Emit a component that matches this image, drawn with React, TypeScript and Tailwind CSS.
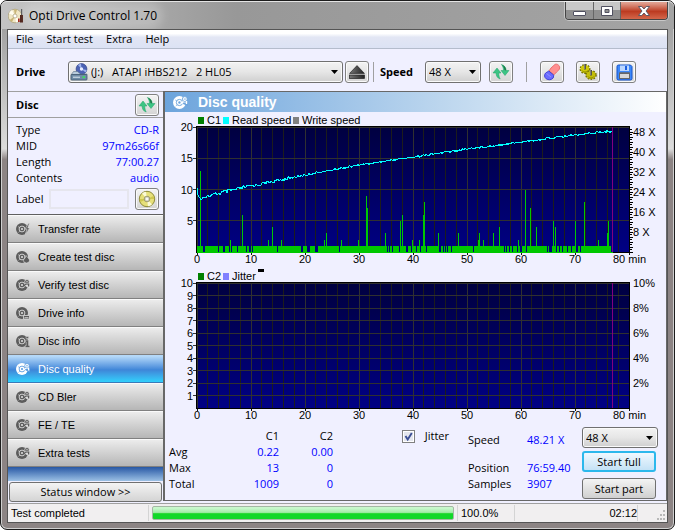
import { useState } from "react"
import type { ReactNode } from "react"

const LEFT = 32
const RIGHT = 464
const TOP = 15
const BOTTOM = 140

// [x, C1 count]
const c1Peaks = [
  [35, 13], [65, 2], [77, 6], [103, 2], [107, 4], [116, 2], [159, 2], [161, 3], [176, 2],
  [193, 2], [201, 9], [202, 7], [220, 3], [235, 5], [237, 6], [247, 2], [254, 2], [258, 6],
  [259, 8], [273, 3], [293, 3], [313, 2], [314, 3], [318, 2], [328, 3], [334, 4], [353, 2],
  [360, 10], [365, 7], [371, 4], [388, 5], [390, 4], [410, 5], [419, 8], [433, 2], [442, 3], [443, 5],
]

// [x, width] of the stretches without errors
const c1Gaps = [
  [38, 2], [53, 1], [58, 2], [64, 3], [72, 1], [77, 1], [81, 1], [84, 2], [87, 1], [112, 1],
  [136, 2], [142, 3], [150, 3], [174, 1], [222, 1], [224, 1], [227, 1], [234, 1], [241, 2],
  [246, 1], [251, 1], [255, 1], [261, 1], [274, 2], [278, 1], [280, 1], [282, 1], [286, 1],
  [308, 1], [339, 1], [341, 1], [344, 1], [347, 1], [352, 1], [355, 2], [361, 1], [382, 1],
  [384, 3], [391, 1], [394, 1], [397, 1], [402, 1], [406, 1], [411, 2], [415, 1], [446, 1],
]

const speedAnchors = [
  [32, 77], [33, 83], [34, 86], [36, 86], [59, 80], [86, 74], [140, 63], [194, 53],
  [248, 45], [302, 37], [356, 30], [410, 23], [447, 19],
]

function speedPoints() {
  const points: string[] = []
  for (let x = 32; x <= 447; x++) {
    const i = Math.max(1, speedAnchors.findIndex((a) => a[0] >= x))
    const [x1, y1] = speedAnchors[i - 1]
    const [x2, y2] = speedAnchors[i]
    const base = y1 + ((y2 - y1) * (x - x1)) / (x2 - x1)
    const r = Math.sin(x * 12.9898) * 43758.5453
    const noise = r - Math.floor(r) - 0.5
    const amp = x > 50 && x < 90 ? 4 : x < 125 ? 3 : 2
    points.push(`${x},${(base + noise * amp).toFixed(1)}`)
  }
  return points.join(" ")
}

const navItems = [
  "Transfer rate",
  "Create test disc",
  "Verify test disc",
  "Drive info",
  "Disc info",
  "Disc quality",
  "CD Bler",
  "FE / TE",
  "Extra tests",
]

const discRows = [
  ["Type", "CD-R"],
  ["MID", "97m26s66f"],
  ["Length", "77:00.27"],
  ["Contents", "audio"],
]

function DiscGlyph({ kind, color = "#5c5c5c", hole = "#dcdcdc", size = 14 }: { kind: string; color?: string; hole?: string; size?: number }) {
  return (
    <svg width={size} height={size} viewBox="0 0 14 14" aria-hidden="true">
      <circle cx="6" cy="7" r="6" fill={color} />
      <circle cx="6" cy="7" r="2.9" fill="none" stroke={hole} strokeWidth="0.9" />
      <circle cx="6" cy="7" r="1.1" fill={hole} />
      <path d="M2 4.6l1.6 1M2.5 10.4l1.4-1.2" stroke={hole} strokeWidth="0.6" />
      {kind === "Transfer rate" && (
        <path d="M12.4 1.5L9 7h2l-1.6 5L13.8 6h-2l1.6-4.5z" fill={color} stroke={hole} strokeWidth="0.6" />
      )}
      {kind === "Create test disc" && (
        <path d="M10 5.5c1 1.6 3.6 3 3.6 5.2a3.2 3.2 0 0 1-6.2 0C7.4 9 10 8 10 5.5z" fill={color} stroke={hole} strokeWidth="0.7" />
      )}
      {kind === "Drive info" && (
        <path d="M7.5 9.5h6v3.5h-6zM8.5 11.6h4" fill={color} stroke={hole} strokeWidth="0.8" />
      )}
      {kind === "Disc info" && (
        <path d="M10 2.5h2.6v2H10zM9.4 6h3.2v5.5h1.2v2H9.2v-2h1V8h-.8z" fill={color} stroke={hole} strokeWidth="0.5" />
      )}
      {!["Transfer rate", "Create test disc", "Drive info", "Disc info"].includes(kind) && (
        <>
          <path d="M8.5 7H14v3.2L9.8 8.6z" fill={hole} />
          <circle cx="11" cy="3.8" r="2.3" fill={color} stroke={hole} strokeWidth="0.8" />
          <path d="M10 3.8h2" stroke={hole} strokeWidth="0.8" />
          <path d="M9.5 6L8 8.2M12.6 5.5v3" stroke={color} strokeWidth="1.3" />
        </>
      )}
    </svg>
  )
}

function RefreshIcon() {
  return (
    <svg width="18" height="18" viewBox="0 0 18 18" aria-hidden="true">
      <path d="M5 5L9 10H6.800c0 2.500.4 4 1.400 6-3-.8-4-3.200-4.200-6H1z" fill="#3cc484" stroke="#1fa566" strokeWidth="0.5" />
      <path d="M13 12.500L9 7.500h2.500C11.400 5 10.800 3 9.400 1.500c3.200.8 4.600 3.200 4.800 6H17z" fill="#3cc484" stroke="#1fa566" strokeWidth="0.5" />
      <path d="M9.400 1.500c3.200.8 4.600 3.200 4.800 6l-1.800-.4C12.300 4.500 11 2.800 9.400 1.500z" fill="#1d7a4a" />
    </svg>
  )
}

function EjectIcon() {
  return (
    <svg width="16" height="14" viewBox="0 0 16 14" aria-hidden="true">
      <defs>
        <linearGradient id="eject" x1="0" y1="0" x2="1" y2="0">
          <stop offset="0" stopColor="#777" />
          <stop offset="1" stopColor="#222" />
        </linearGradient>
      </defs>
      <path d="M8 .6L15.4 8.4H.6z" fill="url(#eject)" stroke="#222" strokeWidth="0.7" />
      <rect x="0.5" y="10" width="15" height="3.5" fill="url(#eject)" stroke="#222" strokeWidth="0.7" />
    </svg>
  )
}

function EraserIcon() {
  return (
    <svg width="18" height="18" viewBox="0 0 18 18" aria-hidden="true">
      <path d="M8 5l4-3.600c2-1 5 1 4.600 3.600-.1 2-1.600 2.600-3 4l-2.600 2.800L6 8z" fill="#ff8f8f" stroke="#e86464" strokeWidth="0.9" />
      <path d="M5.800 8l5 4.200-.6 2.800c-1.800 2.200-5 2.200-7 .8-2-1.600-2.200-4-.6-5.800z" fill="#6b6bff" stroke="#3a3ad0" strokeWidth="0.9" />
      <path d="M3.500 10.500l4.500 3.500" stroke="#9c9cff" strokeWidth="0.8" />
    </svg>
  )
}

function GearsIcon() {
  return (
    <svg width="18" height="18" viewBox="0 0 18 18" aria-hidden="true">
      <ellipse cx="6" cy="6" rx="4.500" ry="4" fill="#d6d000" stroke="#6f6c00" strokeWidth="2" strokeDasharray="1.600 1.200" />
      <ellipse cx="6" cy="6" rx="4.200" ry="3.700" fill="#d0ca08" />
      <ellipse cx="12" cy="12" rx="4.800" ry="4" fill="#c8c200" stroke="#6f6c00" strokeWidth="2" strokeDasharray="1.600 1.200" />
      <ellipse cx="12" cy="12" rx="4.500" ry="3.700" fill="#c4be08" />
      <path d="M3 7.500c1.500 2 4.500 2 6 0M9 13.500c1.500 2 4.500 2 6 0" fill="none" stroke="#8a8600" />
      <path d="M6 1v5.500M12 7v5.500" stroke="#4d4d4d" strokeWidth="1.800" />
      <path d="M5.400 1v5M11.400 7v5" stroke="#aaa" strokeWidth="0.6" />
    </svg>
  )
}

function SaveIcon() {
  return (
    <svg width="17" height="17" viewBox="0 0 17 17" aria-hidden="true">
      <path d="M1 2.500A1.500 1.500 0 0 1 2.500 1h12L16 2.500v12a1.500 1.500 0 0 1-1.500 1.500h-12A1.500 1.500 0 0 1 1 14.500z" fill="#3c88fa" stroke="#1450c8" />
      <rect x="4" y="1.500" width="9" height="5.500" fill="#bcd7ff" />
      <rect x="9" y="2" width="2" height="4" fill="#1d5fe0" />
      <rect x="3.500" y="9" width="10" height="5.500" fill="#d8d8d8" stroke="#666" />
      <rect x="3.500" y="8.500" width="10" height="1.500" fill="#666" />
    </svg>
  )
}

function YellowDiscIcon() {
  return (
    <svg width="18" height="18" viewBox="0 0 18 18" aria-hidden="true">
      <circle cx="9" cy="9" r="7.700" fill="#e6e07a" stroke="#8e8a3a" />
      <path d="M9 9L4 3.500A7.500 7.500 0 0 1 8 1.700zM9 9l5 5.500a7.500 7.500 0 0 1-4 1.800z" fill="#fbfad8" />
      <path d="M9 9L15.500 6a7.500 7.500 0 0 1 .8 3zM9 9L2.500 12a7.500 7.500 0 0 1-.8-3z" fill="#cfc850" />
      <circle cx="9" cy="9" r="2.800" fill="#d8d8c8" stroke="#8e8a5a" strokeWidth="0.8" />
      <circle cx="9" cy="9" r="1.100" fill="#fff" />
    </svg>
  )
}

function DriveIcon() {
  return (
    <svg width="18" height="18" viewBox="0 0 18 18" aria-hidden="true">
      <circle cx="11.500" cy="6" r="5.400" fill="#4c63b4" stroke="#2c3f86" strokeWidth="0.7" />
      <path d="M11.500 6L8 2a5.200 5.200 0 0 1 3-1.300zM11.500 6l4 3.500a5 5 0 0 0 1.200-2.500z" fill="#9fb4ee" />
      <circle cx="11.500" cy="6" r="1.700" fill="#e6ecff" />
      <path d="M3.500 8.500h4l3 2.500h6.500L17 12H1z" fill="#b8cbdc" stroke="#5a7186" strokeWidth="0.6" />
      <rect x="1" y="11.500" width="16" height="5.500" rx="0.8" fill="#6f8ca6" stroke="#3d566c" strokeWidth="0.8" />
      <path d="M3 14.200h7" stroke="#dfe9f2" />
      <rect x="12.500" y="13.300" width="2.500" height="1.800" fill="#3be05a" />
    </svg>
  )
}

function AppIcon() {
  return (
    <svg width="16" height="16" viewBox="0 0 16 16" aria-hidden="true">
      <circle cx="7" cy="8" r="6.800" fill="#efe6c4" stroke="#a89c74" strokeWidth="0.7" />
      <path d="M7 8L1 5.500A6.500 6.500 0 0 1 4 2zM7 8l5 4.500A6.500 6.500 0 0 1 8 14.600z" fill="#fffdf0" />
      <path d="M7 8L6 1.400a6.500 6.500 0 0 1 3 .3zM7 8l-3 6a6.500 6.500 0 0 1-2.300-2z" fill="#c8b578" />
      <circle cx="7" cy="8" r="2" fill="#fff" stroke="#a89c74" strokeWidth="0.7" />
      <path d="M13.600 1v6" stroke="#555" strokeWidth="1.200" />
      <path d="M12 7h3v7.500h-3z" fill="#4a1d14" />
      <path d="M10 10.500h1.700V14H10z" fill="#a0281e" />
    </svg>
  )
}

function IconButton({ label, children }: { label: string; children: ReactNode }) {
  return (
    <button
      type="button"
      aria-label={label}
      className="flex h-[22px] w-6 shrink-0 items-center justify-center rounded-[3px] border border-[#808080] bg-linear-to-b from-[#f4f4f4] to-[#d4d4d4] shadow-[inset_0_0_0_1px_#fafafa]"
    >
      {children}
    </button>
  )
}

function Picker({ label, options, icon, className }: { label: string; options: string[]; icon?: ReactNode; className: string }) {
  return (
    <div className={`relative ${className}`}>
      {icon && <span className="pointer-events-none absolute top-[2px] left-[2px]">{icon}</span>}
      <select
        aria-label={label}
        className={`h-full w-full appearance-none rounded-[3px] border border-[#707070] bg-linear-to-b from-[#f3f3f3] via-[#e6e6e6] to-[#cfcfcf] ${icon ? "pl-[22px]" : "pl-[3px]"} text-[11px] leading-4 shadow-[inset_0_0_0_1px_#fafafa]`}
      >
        {options.map((o) => (
          <option key={o}>{o}</option>
        ))}
      </select>
      <svg width="7" height="4" viewBox="0 0 7 4" className="pointer-events-none absolute top-[9px] right-[5px]">
        <path d="M0 0h7L3.500 4z" />
      </svg>
    </div>
  )
}

function ChartFrame({ id, step, labels, children }: { id: string; step: number; labels: string[]; children: ReactNode }) {
  return (
    <svg viewBox="0 0 501 156" className="block w-full font-['Liberation_Sans',Arial,sans-serif] text-[11px]">
      <defs>
        <linearGradient id={id} x1="0" y1="0" x2="0" y2="1">
          <stop offset="0" stopColor="#000040" />
          <stop offset="1" stopColor="#000084" />
        </linearGradient>
      </defs>
      <rect x={LEFT} y={TOP} width={RIGHT - LEFT} height={BOTTOM - TOP} fill={`url(#${id})`} />
      <g shapeRendering="crispEdges">
        {Array.from({ length: 41 }, (_, i) => (
          <path key={i} d={`M${Math.floor(LEFT + i * 10.8) + 0.5} ${TOP}V${BOTTOM}`} stroke={i % 5 ? "#1c1c1c" : "#303030"} />
        ))}
        {labels.map((l, i) => {
          const y = Math.floor(TOP + i * step) + 0.5
          return (
            <g key={l}>
              <path d={`M${LEFT} ${y}H${RIGHT}`} stroke="#303030" />
              <path d={`M28 ${y}H${LEFT}`} stroke="#333" />
            </g>
          )
        })}
        {Array.from({ length: 9 }, (_, i) => (
          <path key={i} d={`M${LEFT + i * 54 + 0.5} ${BOTTOM}v3`} stroke="#111" />
        ))}
      </g>
      <rect x={LEFT - 0.5} y={TOP - 0.5} width={RIGHT - LEFT + 1} height={BOTTOM - TOP + 1} fill="none" stroke="#000" shapeRendering="crispEdges" />
      {children}
      {labels.map((l, i) => (
        <text key={l} x="28" y={TOP + i * step + 4} textAnchor="end">{l}</text>
      ))}
      {Array.from({ length: 8 }, (_, i) => (
        <text key={i} x={LEFT + i * 54} y="151" textAnchor="middle">{i * 10}</text>
      ))}
      <text x="448" y="151">80 min</text>
    </svg>
  )
}

function QualityChart() {
  return (
    <ChartFrame id="c1bg" step={31.25} labels={["20", "15", "10", "5"]}>
      <rect x="33" y="5" width="6" height="7" fill="#008000" />
      <text x="42" y="12">C1</text>
      <rect x="58" y="5" width="6" height="7" fill="#00ffff" />
      <text x="67" y="12">Read speed</text>
      <rect x="128" y="5" width="6" height="7" fill="#808080" />
      <text x="137" y="12">Write speed</text>
      <g shapeRendering="crispEdges">
        <rect x="32" y="134" width="416" height="7" fill="#00c800" />
        {c1Gaps.map(([x, w]) => (
          <rect key={x} x={x} y="134" width={w} height="6" fill="#000080" />
        ))}
        {c1Peaks.map(([x, n]) => (
          <rect key={x} x={x} y={Math.round(BOTTOM - n * 6.25)} width="1" height={Math.round(n * 6.25)} fill="#00c800" />
        ))}
        <polyline points={speedPoints()} fill="none" stroke="#00ffff" />
        <path d="M447.5 15V140" stroke="#800080" />
        {Array.from({ length: 50 }, (_, i) => (
          <path key={i} d={`M465 ${Math.floor(140 - i * 2.5) + 0.5}h${i % 2 ? 2 : 3}`} stroke="#000" />
        ))}
      </g>
      {[48, 40, 32, 24, 16, 8].map((s, i) => (
        <text key={s} x="468" y={24 + i * 20}>{s} X</text>
      ))}
    </ChartFrame>
  )
}

function JitterChart() {
  return (
    <ChartFrame id="c2bg" step={12.5} labels={["10", "9", "8", "7", "6", "5", "4", "3", "2", "1"]}>
      <rect x="33" y="5" width="6" height="7" fill="#008000" />
      <text x="42" y="12">C2</text>
      <rect x="58" y="5" width="6" height="7" fill="#8080ff" />
      <text x="67" y="12">Jitter</text>
      <rect x="93" y="1" width="6" height="3" />
      <path d="M447.5 15V140" stroke="#800080" shapeRendering="crispEdges" />
      {["10%", "8%", "6%", "4%", "2%"].map((p, i) => (
        <text key={p} x="468" y={19 + i * 25}>{p}</text>
      ))}
    </ChartFrame>
  )
}

function Sidebar({ active, onSelect }: { active: string; onSelect: (name: string) => void }) {
  return (
    <aside className="flex w-[155px] shrink-0 flex-col border-t border-[#a0a0a0]">
      <div className="flex h-[26px] items-center justify-between border-b border-[#a0a0a0] pr-1 pl-2">
        <h2 className="font-bold">Disc</h2>
        <IconButton label="Refresh disc"><RefreshIcon /></IconButton>
      </div>
      <div className="pt-1 pr-1 pb-1 pl-2">
        <dl>
          {discRows.map(([name, value]) => (
            <div key={name} className="flex h-4 items-center justify-between">
              <dt>{name}</dt>
              <dd className="text-[#0000ff]">{value}</dd>
            </div>
          ))}
        </dl>
        <div className="flex items-center pt-[2px]">
          <label htmlFor="disc-label" className="w-[33px]">Label</label>
          <input id="disc-label" className="mr-1.5 h-5 w-0 flex-1 border-2 border-[#e6e6ee] bg-[#f0f0ff] px-1" />
          <IconButton label="Read label"><YellowDiscIcon /></IconButton>
        </div>
      </div>
      <nav className="border-t border-[#606060] font-['Liberation_Sans',Arial,sans-serif]">
        {navItems.map((item) => (
          <button
            key={item}
            type="button"
            onClick={() => onSelect(item)}
            className={
              item === active
                ? "flex h-7 w-full items-center gap-2 border-b border-[#3a7ab8] bg-linear-to-b from-[#b4d8f8] from-5% via-[#3f86d8] via-55% to-[#30d0fc] pl-2 text-white"
                : "flex h-7 w-full items-center gap-2 border-t border-b border-t-[#fafafa] border-b-[#808080] bg-linear-to-b from-[#ececec] to-[#b6b6b6] pl-2"
            }
          >
            <DiscGlyph kind={item} color={item === active ? "#ffffff" : undefined} hole={item === active ? "#5c9ce0" : undefined} />
            {item}
          </button>
        ))}
      </nav>
      <div className="min-h-3.5 flex-1 bg-linear-to-b from-[#2858a4] to-[#9cc0e4]" />
      <div className="p-px">
        <button type="button" className="h-5 w-full rounded-[3px] border border-[#707070] bg-linear-to-b from-[#f4f4f4] to-[#d4d4d4]">
          Status window &gt;&gt;
        </button>
      </div>
    </aside>
  )
}

export default function App() {
  const [active, setActive] = useState("Disc quality")
  const [jitter, setJitter] = useState(true)

  return (
    <div className="bg-white">
      <div className="flex min-h-screen flex-col rounded-[7px] border border-[#1c1c1c] bg-linear-to-b from-[#a2a2a2] from-5% via-[#dcdcdc] via-28% to-[#8c8484] to-30% px-1.5 pb-1.5 font-['Open_Sans','Noto_Sans',sans-serif] text-[11px] leading-4 text-black shadow-[inset_0_0_0_1px_#d0d0d0]">
        <header className="-mx-1.5 flex h-7 items-start justify-between rounded-t-[6px] border-t border-[#e4e4e4] bg-linear-to-r from-[#c4c4c4] via-[#989898] via-35% to-[#a4a4a4] pr-1.5 pl-[7px]">
          <div className="flex h-full items-center gap-[5px]">
            <AppIcon />
            <h1 className="rounded-full bg-white/20 text-[12px] shadow-[0_0_8px_6px_rgba(255,255,255,0.2)]">Opti Drive Control 1.70</h1>
          </div>
          <div className="flex h-[18px] overflow-hidden rounded-b-[4px] border border-t-0 border-[#444] shadow-[0_0_0_1px_rgba(255,255,255,0.4)]">
            <button type="button" aria-label="Minimize" className="flex w-7 items-center justify-center border-r border-[#666] bg-linear-to-b from-[#c8c8c8] from-45% to-[#909090] to-50%">
              <svg width="13" height="12" viewBox="0 0 13 12"><rect x="0.5" y="6.5" width="12" height="4" rx="0.5" fill="#fff" stroke="#505060" /></svg>
            </button>
            <button type="button" aria-label="Maximize" className="flex w-[27px] items-center justify-center border-r border-[#666] bg-linear-to-b from-[#c8c8c8] from-45% to-[#909090] to-50%">
              <svg width="12" height="10" viewBox="0 0 12 10"><path fillRule="evenodd" d="M.5.500h11v9H.5zM4 3.500v3h4v-3z" fill="#fff" stroke="#505060" /></svg>
            </button>
            <button type="button" aria-label="Close" className="flex w-[46px] items-center justify-center bg-linear-to-b from-[#e0a090] from-5% via-[#bc3a20] via-55% to-[#d4664a]">
              <svg width="12" height="10" viewBox="0 0 12 10"><path d="M.5.500h3.300L6 3l2.200-2.500h3.300L8 5l3.500 4.500H8.200L6 7 3.800 9.500H.5L4 5z" fill="#fff" stroke="#505060" strokeWidth="0.9" /></svg>
            </button>
          </div>
        </header>

        <div className="flex flex-1 flex-col border border-[#555] bg-[#f0f0ff]">
          <nav className="flex h-[19px] items-center gap-[13px] border-b border-[#b4bccc] bg-linear-to-b from-white from-20% via-[#e2e6f4] via-40% to-[#dce2f4] pl-2">
            <button type="button">File</button>
            <button type="button">Start test</button>
            <button type="button">Extra</button>
            <button type="button">Help</button>
          </nav>

          <div className="flex items-center pt-3 pb-2 pl-2">
            <span className="w-[52px] font-bold">Drive</span>
            <Picker
              label="Drive"
              icon={<DriveIcon />}
              options={["(J:)\u00a0\u00a0\u00a0ATAPI iHBS212\u00a0\u00a0\u00a02 HL05"]}
              className="mr-0.5 h-[22px] max-w-[275px] min-w-0 flex-1"
            />
            <IconButton label="Eject"><EjectIcon /></IconButton>
            <span className="mr-1.5 ml-1 h-5 w-px bg-[#a0a0a0]" />
            <span className="w-[45px] font-bold">Speed</span>
            <Picker label="Speed" options={["48 X"]} className="mr-2 h-[22px] w-14" />
            <IconButton label="Refresh"><RefreshIcon /></IconButton>
            <span className="mx-[13px] h-5 w-px bg-[#a0a0a0]" />
            <div className="flex gap-3">
              <IconButton label="Erase"><EraserIcon /></IconButton>
              <IconButton label="Options"><GearsIcon /></IconButton>
              <IconButton label="Save"><SaveIcon /></IconButton>
            </div>
          </div>

          <div className="flex flex-1">
            <Sidebar active={active} onSelect={setActive} />

            <main className="mb-0.5 min-w-0 flex-1 border border-l-2 border-[#686868]">
              <div className="flex h-5 items-center gap-2.5 bg-linear-to-r from-[#6ca4dc] via-[#bcd6ee] via-55% to-white pl-2">
                <DiscGlyph kind="Disc quality" color="#ffffff" hole="#6ca4dc" size={15} />
                <h2 className="font-['Liberation_Sans',Arial,sans-serif] text-[14px] font-bold text-white">Disc quality</h2>
              </div>
              <QualityChart />
              <JitterChart />

              <div className="flex items-start">
                <table className="mt-[3px] ml-1">
                  <thead>
                    <tr className="h-[17px]">
                      <td className="w-12" />
                      <th className="w-[62px] text-right font-normal">C1</th>
                      <th className="w-[54px] text-right font-normal">C2</th>
                    </tr>
                  </thead>
                  <tbody>
                    {[["Avg", "0.22", "0.00"], ["Max", "13", "0"], ["Total", "1009", "0"]].map(([name, a, b]) => (
                      <tr key={name}>
                        <th className="text-left font-normal">{name}</th>
                        <td className="text-right text-[#0000ff]">{a}</td>
                        <td className="text-right text-[#0000ff]">{b}</td>
                      </tr>
                    ))}
                  </tbody>
                </table>

                <label className="mt-1 ml-auto flex items-center gap-2.5 pr-[19px]">
                  <span className="relative flex">
                    <input
                      type="checkbox"
                      checked={jitter}
                      onChange={(e) => setJitter(e.target.checked)}
                      className="size-[13px] appearance-none border border-[#808080] bg-[#e4e6ee] shadow-[inset_0_0_0_1px_#fff]"
                    />
                    {jitter && (
                      <svg width="13" height="13" viewBox="0 0 13 13" className="pointer-events-none absolute inset-0">
                        <path d="M3.500 6l2.200 3.500L9.800 3" fill="none" stroke="#3c4f94" strokeWidth="1.900" />
                      </svg>
                    )}
                  </span>
                  Jitter
                </label>

                <dl className="mt-2 grid grid-cols-[59px_55px]">
                  <dt>Speed</dt>
                  <dd className="mb-3 text-[#0000ff]">48.21 X</dd>
                  <dt>Position</dt>
                  <dd className="text-[#0000ff]">76:59.40</dd>
                  <dt>Samples</dt>
                  <dd className="text-[#0000ff]">3907</dd>
                </dl>

                <div className="mt-[3px] mr-2 flex w-[76px] flex-col">
                  <Picker label="Test speed" options={["48 X"]} className="h-[21px]" />
                  <button type="button" className="mt-[3px] h-[21px] w-[74px] rounded-[3px] border-2 border-[#2cb8ec] bg-linear-to-b from-[#f0f8fe] to-[#c4e2f6]">
                    Start full
                  </button>
                  <button type="button" className="mt-1.5 h-[21px] w-[74px] rounded-[3px] border border-[#707070] bg-linear-to-b from-[#f4f4f4] to-[#d0d0d0]">
                    Start part
                  </button>
                </div>
              </div>
            </main>
          </div>

          <footer className="flex h-[19px] items-center border-t border-[#a0a0a0] bg-[#f1eff0] font-['Liberation_Sans',Arial,sans-serif]">
            <span className="h-4 w-[141px] border-r border-[#d4d4d4] pl-[3px]">Test completed</span>
            <div
              role="progressbar"
              aria-label="Test progress"
              aria-valuenow={100}
              className="mx-[3px] h-[14px] flex-1 rounded-[2px] border border-[#a4b8a4] bg-linear-to-b from-[#c8f8cc] from-10% via-[#a0eca8] via-45% to-[#10d828] to-55%"
            />
            <span className="h-4 w-[58px] border-x border-[#d4d4d4] pl-[3px]">100.0%</span>
            <span className="h-4 w-[123px] border-r border-[#d4d4d4] text-right">02:12</span>
            <svg width="29" height="16" viewBox="0 0 29 16" aria-hidden="true">
              <path d="M25 5h2v2h-2zM22 9h2v2h-2zM25 9h2v2h-2zM19 13h2v2h-2zM22 13h2v2h-2zM25 13h2v2h-2z" fill="#b8b8b8" />
            </svg>
          </footer>
        </div>
      </div>
    </div>
  )
}
